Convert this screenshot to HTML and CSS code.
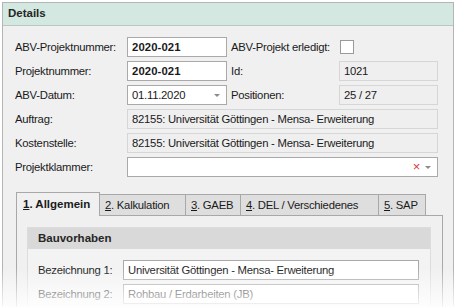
FILE: index.html
```html
<!DOCTYPE html>
<html>
<head>
<meta charset="utf-8">
<link rel="stylesheet" href="styles.css">
</head>
<body>
<div class="panel">
  <div class="panel-header">Details</div>
  <div class="form">
    <div class="label">ABV-Projektnummer:</div>
    <div class="field edit bold">2020-021</div>
    <div class="label second">ABV-Projekt erledigt:</div>
    <div class="checkcell"><span class="check"></span></div>

    <div class="label">Projektnummer:</div>
    <div class="field edit bold">2020-021</div>
    <div class="label second">Id:</div>
    <div class="field ro">1021</div>

    <div class="label">ABV-Datum:</div>
    <div class="field edit combo">01.11.2020<span class="arrow"></span></div>
    <div class="label second">Positionen:</div>
    <div class="field ro">25 / 27</div>

    <div class="label">Auftrag:</div>
    <div class="field ro wide">82155: Universität Göttingen - Mensa- Erweiterung</div>

    <div class="label">Kostenstelle:</div>
    <div class="field ro wide">82155: Universität Göttingen - Mensa- Erweiterung</div>

    <div class="label">Projektklammer:</div>
    <div class="field edit wide combo"><span class="clear">×</span><span class="arrow"></span></div>
  </div>

  <div class="tabs">
    <div class="tabstrip">
      <div class="tab active"><u>1</u>. Allgemein</div>
      <div class="tab"><u>2</u>. Kalkulation</div>
      <div class="tab"><u>3</u>. GAEB</div>
      <div class="tab"><u>4</u>. DEL / Verschiedenes</div>
      <div class="tab"><u>5</u>. SAP</div>
    </div>
    <div class="tabpage">
      <div class="group">
        <div class="group-header">Bauvorhaben</div>
        <div class="group-body">
          <div class="label">Bezeichnung 1:</div>
          <div class="field edit">Universität Göttingen - Mensa- Erweiterung</div>
          <div class="label">Bezeichnung 2:</div>
          <div class="field edit">Rohbau / Erdarbeiten (JB)</div>
        </div>
      </div>
    </div>
  </div>
</div>
<div class="fade"></div>
</body>
</html>
```
FILE: styles.css
```css
html, body {
  margin: 0;
  padding: 0;
  background: #ffffff;
  font-family: "Liberation Sans", Arial, sans-serif;
  font-size: 11.3px;
  letter-spacing: -0.25px;
  color: #1a1a1a;
}
body {
  width: 456px;
  height: 307px;
  overflow: hidden;
  position: relative;
}
.panel {
  margin: 2px 2px 0 2px;
  border: 1px solid #b4b4b4;
  border-bottom: none;
  background: #f0f0f0;
  height: 305px;
  box-sizing: border-box;
  overflow: hidden;
}
.panel-header {
  height: 22px;
  line-height: 21px;
  background: #d3e8e0;
  border-bottom: 1px solid #b9c8c2;
  font-weight: bold;
  font-size: 11.5px;
  letter-spacing: 0;
  padding-left: 5px;
  color: #262626;
}
.form {
  display: grid;
  grid-template-columns: 112px 100px 112px 99px;
  row-gap: 4px;
  grid-auto-rows: 20px;
  padding: 11px 10px 0 12px;
}
.label.second {
  padding-left: 4px;
}
.label {
  line-height: 20px;
  white-space: nowrap;
}
.field {
  box-sizing: border-box;
  height: 20px;
  line-height: 18px;
  padding: 0 4px;
  white-space: nowrap;
  overflow: hidden;
  position: relative;
}
.edit {
  background: #ffffff;
  border: 1px solid #a9a9a9;
}
.ro {
  background: #efefef;
  border: 1px solid #d6d6d6;
}
.bold {
  font-weight: bold;
  letter-spacing: 0.1px;
}
.wide {
  grid-column: 2 / 5;
}
.checkcell {
  display: flex;
  align-items: center;
  padding-left: 1px;
}
.check {
  width: 12px;
  height: 12px;
  border: 1px solid #9a9a9a;
  background: #ffffff;
}
.arrow {
  position: absolute;
  right: 6px;
  top: 8px;
  width: 0;
  height: 0;
  border-left: 3px solid transparent;
  border-right: 3px solid transparent;
  border-top: 3px solid #8a8a8a;
}
.clear {
  position: absolute;
  right: 17px;
  top: 0;
  color: #d9383a;
  font-size: 13px;
  line-height: 18px;
}
.tabs {
  margin: 15px 10px 0 13px;
}
.tabstrip {
  display: flex;
  align-items: flex-end;
  height: 23px;
}
.tab {
  box-sizing: border-box;
  height: 21px;
  line-height: 20px;
  padding: 0 5px;
  background: #dedede;
  border: 1px solid #a8a8a8;
  border-bottom: none;
  margin-left: -1px;
  white-space: nowrap;
}
.tab:first-child {
  margin-left: 0;
}
.tab.active {
  background: #f0f0f0;
  font-weight: bold;
  font-size: 11.5px;
  letter-spacing: 0;
  padding: 0 6px;
  position: relative;
  z-index: 1;
  margin-bottom: -1px;
  height: 24px;
  line-height: 22px;
}
.tab.active { width: 84px; }
.tab:nth-child(2) { width: 87px; }
.tab:nth-child(3) { width: 56px; }
.tab:nth-child(4) { width: 139px; }
.tab:nth-child(5) { width: 48px; }
.tabpage {
  border: 1px solid #a8a8a8;
  background: #f0f0f0;
  height: 120px;
  padding: 11px 11px 0 10px;
}
.group {
  border: 1px solid #dcdcdc;
  background: #f3f3f3;
}
.group-header {
  height: 21px;
  line-height: 21px;
  background: #d9d9d9;
  font-weight: bold;
  font-size: 11.5px;
  letter-spacing: 0;
  padding-left: 10px;
  color: #262626;
}
.group-body {
  display: grid;
  grid-template-columns: 85px 296px;
  grid-auto-rows: 20px;
  row-gap: 4px;
  padding: 11px 0 0 10px;
  height: 80px;
}
.fade {
  position: absolute;
  left: 0;
  top: 0;
  width: 456px;
  height: 307px;
  background: linear-gradient(to bottom, rgba(255,255,255,0) 268px, rgba(255,255,255,0.88) 307px);
  pointer-events: none;
}
```
